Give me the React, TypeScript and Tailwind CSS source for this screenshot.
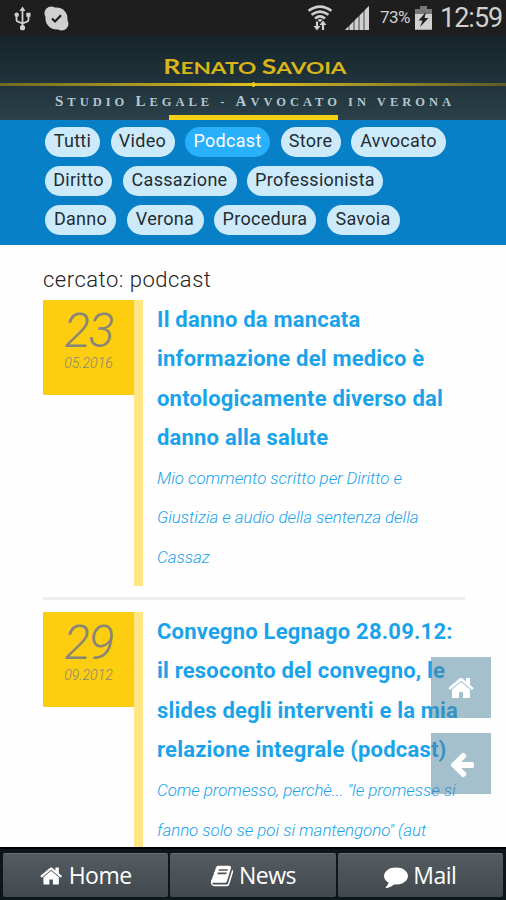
import clsx from 'clsx'

const HOME_PATH =
  'M1408 992v480q0 26-19 45t-45 19h-384v-384h-256v384h-384q-26 0-45-19t-19-45v-480q0-1 .5-3t.5-3l575-474 575 474q1 2 1 6zm223-69l-62 74q-8 9-21 11h-3q-13 0-21-7l-692-577-692 577q-12 8-24 7-13-2-21-11l-62-74q-8-10-7-23.5t11-21.5l719-599q32-26 76-26t76 26l244 204v-195q0-14 9-23t23-9h192q14 0 23 9t9 23v408l219 182q10 8 11 21.5t-7 23.5z'
const ARROW_PATH =
  'M1664 896v128q0 53-32.5 90.5t-84.5 37.5h-704l293 294q38 36 38 90t-38 90l-75 76q-37 37-90 37-52 0-91-37l-651-652q-37-37-37-90 0-52 37-91l651-650q38-38 91-38 52 0 90 38l75 74q38 38 38 91t-38 91l-293 293h704q52 0 84.5 37.5t32.5 90.5z'
const COMMENT_PATH =
  'M1792 896q0 174-120 321.5t-326 233-450 85.5q-70 0-145-8-198 175-460 242-49 14-114 22-17 2-30.5-9t-17.5-29v-1q-3-4-.5-12t2-10 4.5-9.5l6-9 7-8.5 8-9q7-8 31-34.5t34.5-38 31-39.5 32.5-51 27-59 26-76q-157-89-247.5-220t-90.5-281q0-130 71-248.5t191-204.5 286-136.5 348-50.5 348 50.5 286 136.5 191 204.5 71 248.5z'
const BOOK_PATH =
  'M1703 478q40 57 18 129l-275 906q-19 64-76.5 107.5t-122.5 43.5h-923q-77 0-148.5-53.5t-99.5-131.5q-24-67-2-127 0-4 3-27t4-37q1-8-3-21.5t-3-19.5q2-11 8-21t16.5-23.5 16.5-23.5q23-38 45-91.5t30-91.5q3-10 .5-30t-.5-28q3-11 17-28t17-23q21-36 42-92t25-90q1-9-2.5-32t.5-28q4-13 22-30.5t22-22.5q19-26 42.5-84.5t27.5-96.5q1-8-3-25.5t-2-26.5q2-8 9-18t18-23 17-21q8-12 16.5-30.5t15-35 16-36 19.5-32 26.5-23.5 36-11.5 47.5 5.5l-1 3q38-9 51-9h761q74 0 114 56t18 130l-274 906q-36 119-71.5 153.5t-128.5 34.5h-869q-27 0-38 15-11 16-1 43 24 70 144 70h923q29 0 56-15.5t35-41.5l300-987q7-22 5-57 38 15 59 43zm-1064 2q-4 13 2 22.5t20 9.5h608q13 0 25.5-9.5t16.5-22.5l21-64q4-13-2-22.5t-20-9.5h-608q-13 0-25.5 9.5t-16.5 22.5zm-83 256q-4 13 2 22.5t20 9.5h608q13 0 25.5-9.5t16.5-22.5l21-64q4-13-2-22.5t-20-9.5h-608q-13 0-25.5 9.5t-16.5 22.5z'

const tagRows = [
  [
    { label: 'Tutti', width: 'w-[55px]' },
    { label: 'Video', width: 'w-[64px]' },
    { label: 'Podcast', width: 'w-[85px]', active: true },
    { label: 'Store', width: 'w-[60px]' },
    { label: 'Avvocato', width: 'w-[95px]' },
  ],
  [
    { label: 'Diritto', width: 'w-[67px]' },
    { label: 'Cassazione', width: 'w-[114px]' },
    { label: 'Professionista', width: 'w-[136px]' },
  ],
  [
    { label: 'Danno', width: 'w-[71px]' },
    { label: 'Verona', width: 'w-[77px]' },
    { label: 'Procedura', width: 'w-[102px]' },
    { label: 'Savoia', width: 'w-[73px]' },
  ],
]

const posts = [
  {
    day: '23',
    month: '05.2016',
    title: ['Il danno da mancata', 'informazione del medico è', 'ontologicamente diverso dal', 'danno alla salute'],
    excerpt: ['Mio commento scritto per Diritto e', 'Giustizia e audio della sentenza della', 'Cassaz'],
  },
  {
    day: '29',
    month: '09.2012',
    title: ['Convegno Legnago 28.09.12:', 'il resoconto del convegno, le', 'slides degli interventi e la mia', 'relazione integrale (podcast)'],
    excerpt: ['Come promesso, perchè... "le promesse si', 'fanno solo se poi si mantengono" (aut'],
  },
]

const navItems = [
  { label: 'Home', path: HOME_PATH },
  { label: 'News', path: BOOK_PATH },
  { label: 'Mail', path: COMMENT_PATH },
]

function Glyph({ path, className }: { path: string; className: string }) {
  return (
    <svg viewBox="0 0 1792 1792" className={className} fill="currentColor">
      <path d={path} />
    </svg>
  )
}

function StatusBar() {
  return (
    <div className="flex h-9 shrink-0 items-center bg-[#1e1e1e] pl-[14px] pr-[4px] text-[#d0d0d0]">
      {/* usb */}
      <svg width="17" height="25" viewBox="0 0 17 25" fill="none" stroke="currentColor" strokeWidth="1.8">
        <path d="M8.5 3v18M2.5 10v3.5q0 2 2 2.3l4 1.7M14.5 10v3.5q0 2-2 2.3l-4 1.7" />
        <path d="M8.5 .5l3 4.5h-6z" fill="currentColor" stroke="none" />
        <circle cx="8.5" cy="21.7" r="2.6" fill="currentColor" stroke="none" />
        <circle cx="2.7" cy="8.8" r="2.2" fill="currentColor" stroke="none" />
        <path d="M12.3 6.8h4.2v4h-4.2z" fill="currentColor" stroke="none" />
      </svg>
      {/* skype */}
      <svg className="ml-[13px]" width="25" height="25" viewBox="0 0 25 25">
        <circle cx="12.5" cy="12.5" r="11" fill="currentColor" />
        <circle cx="7.3" cy="7.3" r="6.8" fill="currentColor" />
        <circle cx="17.7" cy="17.7" r="6.8" fill="currentColor" />
        <path d="M8 12.5l3 3 6-6.3" fill="none" stroke="#1e1e1e" strokeWidth="2.2" />
      </svg>
      {/* wifi */}
      <svg className="ml-auto" width="26" height="26" viewBox="0 0 26 26" fill="none" stroke="currentColor" strokeWidth="2.6">
        <path d="M1.500 5.800q11.500-8.500 23 0M4.500 9.800q8.500-6.500 17 0M8 13.400q5-4 10 0" />
        <path d="M10.500 14.800q2.500-1.600 5 0l-2.500 2.500z" fill="currentColor" stroke="none" />
        <path d="M10 16.500v6M16 25v-6" strokeWidth="2.2" />
        <path d="M6.500 21h7l-3.500 4.500zM12.500 20h7l-3.500-4.500z" fill="currentColor" stroke="none" />
      </svg>
      {/* signal */}
      <svg className="ml-[12px]" width="25" height="24" viewBox="0 0 25 24">
        <path d="M24 0v24H0z" fill="#8a8a8a" />
        <path d="M24 0v24h-4V4zM18 6v18h-3V9zM13 11v13h-3V14zM8 16v8H5v-5zM3 21v3H0z" fill="currentColor" />
      </svg>
      <span className="ml-[10px] w-[32px] whitespace-nowrap text-[17px] tracking-[-0.6px]">73%</span>
      {/* battery */}
      <svg className="ml-[3px]" width="17" height="24" viewBox="0 0 17 24">
        <path d="M5 0h7v3h5v21H0V3h5z" fill="#777" />
        <path d="M0 8h17v15.500H0z" fill="currentColor" />
        <path d="M11 6L3.500 14.500h4L5 21l8.500-9H9.500z" fill="#1e1e1e" />
      </svg>
      <span className="ml-[8px] w-[62px] whitespace-nowrap text-[27px] leading-[36px] tracking-[-1px]">12:59</span>
    </div>
  )
}

function Header() {
  return (
    <div className="flex h-[84px] shrink-0 flex-col items-center bg-linear-to-b from-[#15242a] to-[#2b4049]">
      <div className="flex h-[47px] items-end">
        <div className="mb-[-1px] ml-[3px] scale-x-[1.33] whitespace-nowrap font-[Lato,sans-serif] text-[17px] leading-[32px] font-bold text-[#d9b51b]">
          <span className="text-[20px]">R</span>ENATO <span className="text-[20px]">S</span>AVOIA
        </div>
      </div>
      <div className="flex h-[3px] w-full items-center justify-center bg-linear-to-r from-[#6f6a22] via-[#e2c01d] to-[#5d5b25]">
        <div className="h-[5px] w-[3px] shrink-0 rounded-full bg-[#f0cc1c]" />
      </div>
      <div className="mt-[4px] ml-[4px] h-[25px] whitespace-nowrap font-['Liberation_Serif',serif] text-[12.500px] leading-[22px] font-bold tracking-[4px] text-[#b3c6d1]">
        <span className="text-[15px]">S</span>TUDIO <span className="text-[15px]">L</span>EGALE - <span className="text-[15px]">A</span>VVOCATO IN VERONA
      </div>
      <div className="h-[5px] w-[169px] bg-[#f7cf13]" />
    </div>
  )
}

function Tags() {
  return (
    <div className="flex h-[125px] shrink-0 flex-col gap-[9px] bg-[#0780c8] pt-[7px] pl-[45px]">
      {tagRows.map((row, i) => (
        <div key={i} className="flex gap-[10.500px]">
          {row.map((tag) => (
            <span
              key={tag.label}
              className={clsx(
                'h-[30px] rounded-full text-center text-[18px] leading-[27px] tracking-[0.3px] whitespace-nowrap',
                tag.width,
                tag.active ? 'bg-[#29b0fb] text-white' : 'bg-[#cdeafb] text-[#222d33]'
              )}
            >
              {tag.label}
            </span>
          ))}
        </div>
      ))}
    </div>
  )
}

function Post({ post }: { post: (typeof posts)[number] }) {
  return (
    <div className="flex">
      <div className="flex h-[95px] w-[91px] shrink-0 flex-col items-center bg-[#fdce10] text-[#88857a] italic">
        <span className="mt-[7px] text-[48px] leading-[48px] font-light tracking-[-1.5px]">{post.day}</span>
        <span className="text-[14px] leading-[16px] font-light">{post.month}</span>
      </div>
      <div className="w-[9px] shrink-0 bg-[#ffe584]" />
      <div className="ml-[14px] whitespace-nowrap text-[#1ba3ea]">
        <div className="text-[22px] leading-[39.300px] font-bold tracking-[0.2px]">
          {post.title.map((line) => (
            <div key={line}>{line}</div>
          ))}
        </div>
        <div className="pt-[2px] pb-[9px] text-[17px] leading-[39.300px] font-light tracking-[-0.080px] italic">
          {post.excerpt.map((line) => (
            <div key={line}>{line}</div>
          ))}
        </div>
      </div>
    </div>
  )
}

export default function App() {
  return (
    <div className="relative flex h-[900px] w-[506px] flex-col overflow-hidden bg-[#fefefe] font-[Roboto,sans-serif]">
      <StatusBar />
      <Header />
      <Tags />
      <main className="min-h-0 flex-1 overflow-hidden px-[43px] pt-[21px]">
        <h1 className="h-[34px] text-[22px] leading-[28px] font-light tracking-[0.5px] text-[#222]">cercato: podcast</h1>
        <Post post={posts[0]} />
        <div className="mt-[11px] mb-[12px] h-[3px] w-[422px] bg-[#eee]" />
        <Post post={posts[1]} />
      </main>
      <nav className="flex h-[53px] shrink-0 gap-[2px] border-t-2 border-black bg-[#0d171b] px-[3px] pt-[4px] pb-[3px]">
        {navItems.map((item) => (
          <div
            key={item.label}
            className="flex flex-1 items-center justify-center gap-[5px] rounded-[2px] border-t border-[#697074] bg-linear-to-b from-[#555c61] to-[#42494e] font-['Open_Sans',sans-serif] text-[23px] tracking-[-0.5px] text-white"
          >
            <Glyph path={item.path} className="size-[24px]" />
            <span>{item.label}</span>
          </div>
        ))}
      </nav>
      {/* floating buttons */}
      <div className="absolute top-[657px] left-[431px] flex flex-col gap-[15px] text-white">
        {[HOME_PATH, ARROW_PATH].map((path) => (
          <div key={path} className="flex h-[61px] w-[60px] items-center justify-center bg-[#4b819b]/50 pl-px">
            <Glyph path={path} className="size-[28px]" />
          </div>
        ))}
      </div>
    </div>
  )
}
